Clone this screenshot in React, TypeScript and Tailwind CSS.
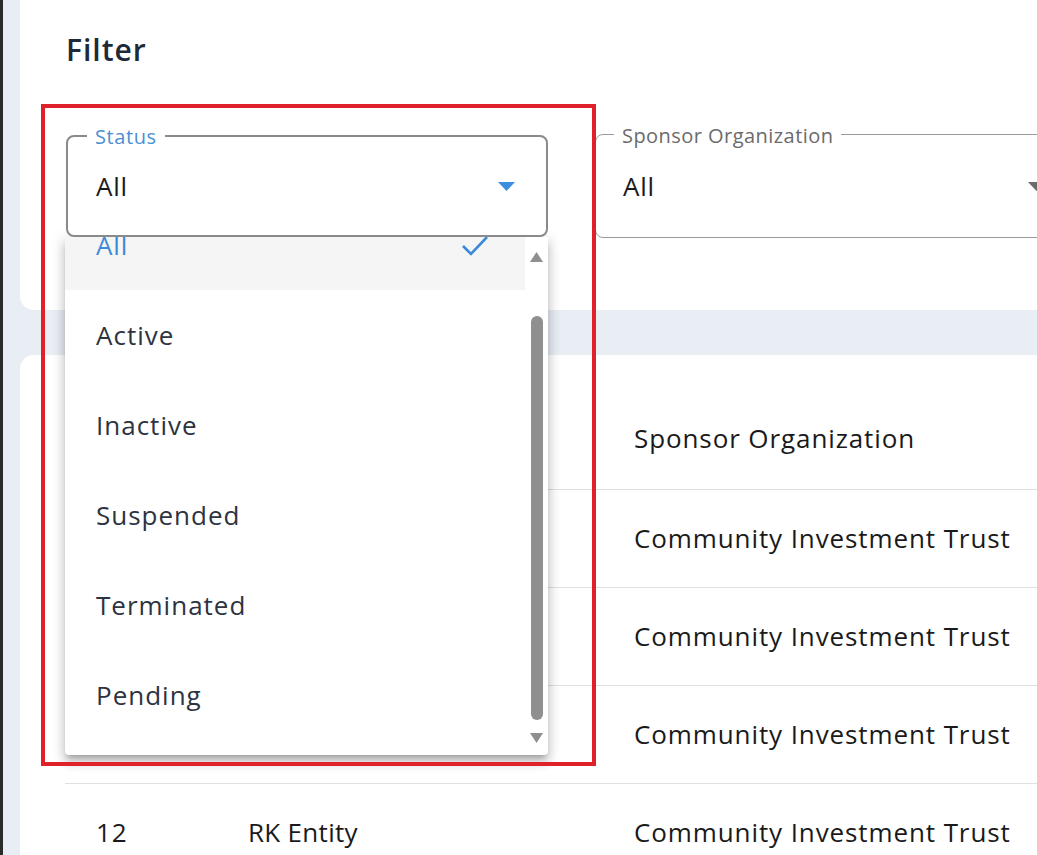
import React from "react";

const rows = [
  { id: "", name: "", org: "Community Investment Trust" },
  { id: "", name: "", org: "Community Investment Trust" },
  { id: "", name: "", org: "Community Investment Trust" },
  { id: "12", name: "RK Entity", org: "Community Investment Trust" },
];

const options = ["All", "Active", "Inactive", "Suspended", "Terminated", "Pending"];

function Caret({ color }: { color: string }) {
  return (
    <svg width="17" height="9" viewBox="0 0 17 9" className="shrink-0">
      <polygon points="0,0 17,0 8.5,9" fill={color} />
    </svg>
  );
}

export default function App() {
  return (
    <div className="relative w-[1037px] h-[855px] overflow-hidden bg-[#e9eef4] flex font-['Open_Sans','Noto_Sans',sans-serif]">
      <div className="w-[3px] shrink-0 bg-[#2b2b2b]" />
      <div className="flex-1 flex flex-col pl-[17px] min-w-0">
        <section className="h-[310px] shrink-0 bg-white rounded-bl-[14px] pl-[46px] pt-[28px]">
          <h1 className="text-[30px] leading-[44px] font-semibold tracking-[1px] text-[#1e2939]">Filter</h1>
          <div className="flex gap-[47px] mt-[63px]">
            <div className="relative z-20 w-[482px] h-[102px] shrink-0 rounded-[8px] border-2 border-[#8a8a8a] bg-white flex items-center justify-between pl-[28px] pr-[31px]">
              <span className="absolute -top-[13px] left-[19px] px-[8px] bg-white text-[20px] leading-[26px] tracking-[0.6px] text-[#4a8fd4]">
                Status
              </span>
              <span className="text-[26px] tracking-[0.8px] text-[#1a1a1a]">All</span>
              <Caret color="#3b8fde" />
            </div>
            <div className="relative w-[482px] h-[104px] -mt-[1px] shrink-0 rounded-[8px] border border-[#9a9a9a] bg-white flex items-center justify-between pl-[27px] pr-[31px]">
              <span className="absolute -top-[12px] left-[18px] px-[8px] bg-white text-[20px] leading-[26px] tracking-[0.45px] text-[#6b6b6b] whitespace-nowrap">
                Sponsor Organization
              </span>
              <span className="text-[26px] tracking-[0.8px] text-[#1a1a1a]">All</span>
              <Caret color="#6b6b6b" />
            </div>
          </div>
        </section>
        <div className="h-[45px] shrink-0" />
        <section className="flex-1 bg-white rounded-tl-[14px] pt-[37px] pl-[45px]">
          <div className="grid grid-cols-[152px_386px_1fr] h-[98px] pb-[5px] items-center border-b border-[#e0e0e0] text-[26px] tracking-[0.9px] text-[#1a1a1a]">
            <div className="pl-[31px]" />
            <div className="pl-[31px]" />
            <div className="pl-[31px] whitespace-nowrap">Sponsor Organization</div>
          </div>
          {rows.map((r, i) => (
            <div
              key={i}
              className="grid grid-cols-[152px_386px_1fr] h-[98px] items-center border-b border-[#e0e0e0] text-[26px] tracking-[0.9px] text-[#1a1a1a]"
            >
              <div className="pl-[31px]">{r.id}</div>
              <div className="pl-[31px] whitespace-nowrap tracking-[0.3px]">{r.name}</div>
              <div className="pl-[31px] whitespace-nowrap">{r.org}</div>
            </div>
          ))}
        </section>
      </div>

      {/* Open dropdown menu */}
      <div className="absolute z-10 left-[65px] top-[237px] w-[483px] h-[518px] bg-white rounded-b-[4px] overflow-hidden flex shadow-[0_5px_5px_-3px_rgba(0,0,0,0.2),0_8px_10px_1px_rgba(0,0,0,0.14),0_3px_14px_2px_rgba(0,0,0,0.12)]">
        <div className="flex-1 overflow-hidden">
          <div className="-mt-[37px] flex flex-col">
            {options.map((o, i) => (
              <div
                key={o}
                className={
                  i === 0
                    ? "h-[90px] flex items-center justify-between pl-[31px] pr-[36px] bg-[#f5f5f5] text-[26px] tracking-[0.9px] text-[#3b8ad9]"
                    : "h-[90px] flex items-center pl-[31px] text-[26px] tracking-[1px] text-[#2d3340]"
                }
              >
                <span>{o}</span>
                {i === 0 && (
                  <svg width="28" height="22" viewBox="0 0 28 22" fill="none">
                    <path d="M2 12 L10 20 L26 3" stroke="#3b8ad9" strokeWidth="2.6" />
                  </svg>
                )}
              </div>
            ))}
          </div>
        </div>
        <div className="w-[23px] shrink-0 flex flex-col items-center pt-[15px]">
          <svg width="13" height="10" viewBox="0 0 13 10">
            <polygon points="6.5,0 13,10 0,10" fill="#8f8f8f" />
          </svg>
          <div className="mt-[54px] w-[12px] h-[404px] rounded-[6px] bg-[#8f8f8f]" />
          <svg width="13" height="10" viewBox="0 0 13 10" className="mt-[13px]">
            <polygon points="0,0 13,0 6.5,10" fill="#8f8f8f" />
          </svg>
        </div>
      </div>

      {/* Red highlight annotation */}
      <div className="absolute z-30 left-[41px] top-[104px] w-[555px] h-[662px] border-[4px] border-[#e0212a] pointer-events-none" />
    </div>
  );
}
